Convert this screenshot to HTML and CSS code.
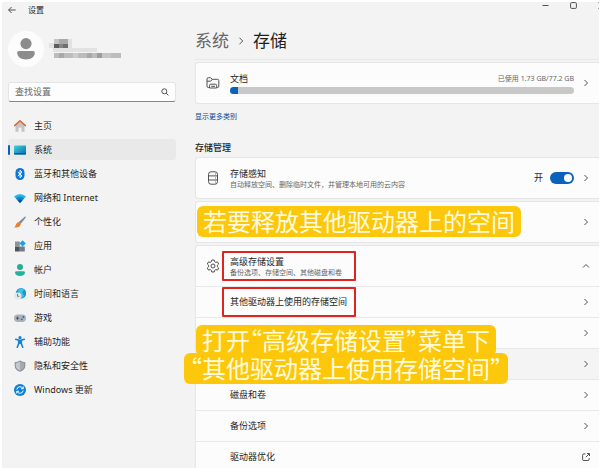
FILE: index.html
```html
<!DOCTYPE html>
<html lang="zh-CN">
<head>
<meta charset="UTF-8">
<meta name="viewport" content="width=device-width, initial-scale=1.0">
<title>设置</title>
<link rel="stylesheet" href="styles.css">
</head>
<body>

<div class="window">
  <header class="titlebar">
    <button class="icon-btn" type="button" aria-label="返回">
      <svg width="8" height="8" viewBox="0 0 8 8"><path d="M7.6 4H.6M3.6 1 .6 4l3 3" class="line"/></svg>
    </button>
    <span class="app-name">设置</span>
    <div class="window-controls">
      <button class="icon-btn" type="button" aria-label="最小化">
        <svg width="7" height="8" viewBox="0 0 7 8"><path d="M.5 3.500h6" class="line"/></svg>
      </button>
      <button class="icon-btn" type="button" aria-label="最大化">
        <svg width="7" height="8" viewBox="0 0 7 8"><rect x=".6" y=".6" width="5.8" height="5.8" rx="1" class="line"/></svg>
      </button>
      <button class="icon-btn" type="button" aria-label="关闭">
        <svg width="7" height="8" viewBox="0 0 7 8"><path d="M.5.5l6 6M6.500.5l-6 6" class="line"/></svg>
      </button>
    </div>
  </header>

  <aside class="sidebar">
    <div class="account">
      <svg class="avatar" width="36" height="36" viewBox="0 0 36 36">
        <circle cx="18" cy="18" r="18" fill="#fcfcfc"/>
        <circle cx="18" cy="12.6" r="5.6" fill="#8c8c8c"/>
        <path d="M11 20h14q1.800 0 1.800 1.800c0 4.200-4 6.700-8.800 6.700s-8.800-2.500-8.800-6.700Q9.200 20 11 20z" fill="#8c8c8c"/>
      </svg>
      <!-- 打码的用户名和邮箱 -->
      <svg width="74" height="20" viewBox="0 0 74 20">
        <path d="M0 4h5V0h18v9h25v4h-44V9H0z" fill="#e2e2e2"/>
        <rect x="5" width="5" height="5" fill="#c4c4c4"/>
        <rect x="10" width="9" height="5" fill="#a9a9a9"/>
        <rect x="5" y="5" width="5" height="4" fill="#5c5c5c"/>
        <rect x="10" y="5" width="4" height="4" fill="#858585"/>
        <rect x="14" y="5" width="5" height="4" fill="#6f6f6f"/>
        <rect x="5" y="14" width="67" height="5" fill="#bcbcbc"/>
        <rect x="10" y="14" width="5" height="5" fill="#a8a8a8"/>
        <rect x="24" y="14" width="5" height="5" fill="#cccccc"/>
        <rect x="38" y="14" width="5" height="5" fill="#a8a8a8"/>
        <rect x="48" y="14" width="5" height="5" fill="#9c9c9c"/>
        <rect x="53" y="14" width="9" height="5" fill="#c6c6c6"/>
      </svg>
    </div>

    <label class="search">
      <input type="text" placeholder="查找设置" aria-label="查找设置">
      <svg width="8" height="8" viewBox="0 0 8 8"><circle cx="3.300" cy="3.300" r="2.500" class="line"/><path d="M5.200 5.200l2.200 2.200" class="line"/></svg>
    </label>

    <nav class="nav">
      <a href="#">
        <svg width="12" height="12" viewBox="0 0 12 12"><path d="M1.500 5 6 1l4.500 4v6.200q0 .5-.5.5H7.500V7.500h-3v4.200H2q-.5 0-.5-.5z" fill="#c4c4c6"/><path d="M.6 5.600 6 .8l5.400 4.800" fill="none" stroke="#d9692f" stroke-width="1.500" stroke-linecap="round" stroke-linejoin="round"/></svg>
        主页
      </a>
      <a href="#" class="active">
        <svg width="12" height="12" viewBox="0 0 12 12"><defs><linearGradient id="sys" x2="1" y2="1"><stop stop-color="#3fd3e2"/><stop offset="1" stop-color="#0b6aa8"/></linearGradient></defs><rect y="1.500" width="12" height="9" rx=".8" fill="url(#sys)"/><path d="M0 9h12v.8q0 .7-.7.7H.7q-.7 0-.7-.7z" fill="#0a5c8f"/></svg>
        系统
      </a>
      <a href="#">
        <svg width="12" height="12" viewBox="0 0 12 12"><rect x="1.500" width="9" height="12" rx="4.500" fill="#0a74e0"/><path d="M3.800 4 8 7.800 6 9.700V2.300L8 4.200 3.800 8" fill="none" stroke="#fff"/></svg>
        蓝牙和其他设备
      </a>
      <a href="#">
        <svg width="12" height="12" viewBox="0 0 12 12"><path d="M0 4.400Q6-.6 12 4.400L6 11z" fill="#27b8ea"/><path d="M1.800 6.300Q6 2.900 10.200 6.300L6 11z" fill="#1585d4"/><path d="M3.600 8.300Q6 6.600 8.400 8.300L6 11z" fill="#0c4f9e"/></svg>
        网络和 Internet
      </a>
      <a href="#">
        <svg width="12" height="12" viewBox="0 0 12 12"><path d="M11 .4q1.200.2.600 1.400L6.600 8 4.500 6.200z" fill="#7f8b96"/><path d="M4.400 6 6.700 8.100C6.500 11 3.500 12 .2 11.500 2 10.500 1.500 7 4.400 6z" fill="#ec7f2e"/></svg>
        个性化
      </a>
      <a href="#">
        <svg width="12" height="12" viewBox="0 0 12 12"><rect x="1" y="1.500" width="4.800" height="4.800" fill="#8b949c"/><rect x="1" y="6.500" width="4.800" height="5" fill="#4c555d"/><rect x="6" y="6.500" width="4.800" height="5" fill="#737c84"/><path d="M8.600.2 11.800 3.400 8.600 6.600 5.400 3.400z" fill="#1f9fe0"/></svg>
        应用
      </a>
      <a href="#">
        <svg width="12" height="12" viewBox="0 0 12 12"><circle cx="6" cy="3" r="3" fill="#27ad96"/><path d="M2.500 7.200h7q1.500 0 1.500 1.300C11 10.600 8.800 12 6 12s-5-1.400-5-3.500q0-1.300 1.500-1.300z" fill="#23b39c"/></svg>
        帐户
      </a>
      <a href="#">
        <svg width="12" height="12" viewBox="0 0 12 12"><circle cx="7" cy="5.300" r="5.200" fill="#2196d6"/><path d="M4 2q3-2.500 6-.5L8 4.500l2 3-2 2.800Q5 8 4 2z" fill="#41c5e0"/><circle cx="3.800" cy="8" r="3.600" fill="#e4e7ea"/><path d="M3.500 6v2.300h1.800" fill="none" stroke="#59636c" stroke-width=".8"/></svg>
        时间和语言
      </a>
      <a href="#">
        <svg width="12" height="12" viewBox="0 0 12 12"><rect y="2.500" width="12" height="7.500" rx="3.700" fill="#a9b1ba"/><path d="M2 6.200h3M3.500 4.700v3" stroke="#4a535c"/><circle cx="9.400" cy="5" r=".9" fill="#1c6cc4"/><circle cx="7.800" cy="7.300" r=".9" fill="#1c6cc4"/></svg>
        游戏
      </a>
      <a href="#">
        <svg width="12" height="12" viewBox="0 0 12 12"><circle cx="6" cy="1.700" r="1.600" fill="#1583d8"/><path d="M1.700 3.200 6 4.600l4.300-1.400M6 4.500v3M4.700 4.800v2.700L3.300 11.300M7.300 4.800v2.700l1.400 3.800" fill="none" stroke="#1583d8" stroke-width="1.600" stroke-linecap="round" stroke-linejoin="round"/></svg>
        辅助功能
      </a>
      <a href="#">
        <svg width="12" height="12" viewBox="0 0 12 12"><path d="M6 .5q2.500 1.600 5.300 1.700v3.300q0 4.300-5.300 6.300Q.7 9.800.7 5.500V2.200Q3.500 2.100 6 .5z" fill="#858c94"/><path d="M6 1.600q2 1.200 4.300 1.500v2.500q0 3.500-4.300 5.100z" fill="#a5abb1"/><path d="M6 1.600Q4 2.800 1.700 3.100v2.500q0 3.500 4.300 5.100z" fill="#c4c8cc"/></svg>
        隐私和安全性
      </a>
      <a href="#">
        <svg width="12" height="12" viewBox="0 0 12 12"><circle cx="6" cy="6" r="6" fill="#0e80d4"/><path d="M2.800 5.500A3.300 3.300 0 0 1 9 4.500M9.200 6.500A3.300 3.300 0 0 1 3 7.500M9.200 2.500v2.200H7M2.800 9.500V7.300H5" fill="none" stroke="#fff"/></svg>
        Windows 更新
      </a>
    </nav>
  </aside>

  <main class="content">
    <h1 class="breadcrumb">
      <a href="#">系统</a>
      <svg width="6" height="8" viewBox="0 0 6 8"><path d="M1.500.8 4.700 4 1.500 7.200" class="line"/></svg>
      <span>存储</span>
    </h1>

    <div class="panel">
      <section class="card">
        <a href="#" class="row tall">
          <svg class="row-icon" width="14" height="14" viewBox="0 0 14 14"><path d="M3 11.500H2.300Q1 11.500 1 10.200V3Q1 1.700 2.300 1.700h2.400L6.300 3.300h5.200q1.300 0 1.300 1.300v5.600q0 1.300-1.300 1.300H11M1 5.200h3.700l1.600-1.900M3.500 12V9.500q0-1.300 1.300-1.300h4.600q1.300 0 1.300 1.300V12zM5.200 10.300h3.800" class="line"/></svg>
          <span class="usage">
            <span class="usage-head">
              <span>文档</span>
              <span class="hint">已使用 1.73 GB/77.2 GB</span>
            </span>
            <span class="bar"><span class="bar-fill" style="width: 2.24%"></span></span>
          </span>
          <svg class="chevron" width="8" height="8" viewBox="0 0 8 8"><path d="M2.500 1 5.500 4l-3 3" class="line"/></svg>
        </a>
      </section>

      <a href="#" class="more">显示更多类别</a>

      <h2>存储管理</h2>

      <section class="card">
        <div class="row tall">
          <svg class="row-icon" width="14" height="14" viewBox="0 0 14 14"><rect x="2.500" y=".8" width="9" height="12.400" rx="2.500" class="line"/><path d="M2.500 4.900h9M2.500 9h9M9 3h.8M9 7h.8M9 11h.8" class="line"/></svg>
          <span class="text">
            <span>存储感知</span>
            <span class="hint">自动释放空间、删除临时文件，并管理本地可用的云内容</span>
          </span>
          <label class="switch">
            开
            <input type="checkbox" checked>
          </label>
          <svg class="chevron" width="8" height="8" viewBox="0 0 8 8"><path d="M2.500 1 5.500 4l-3 3" class="line"/></svg>
        </div>
      </section>

      <section class="card cleanup">
        <a href="#" class="row tall" aria-label="清理建议">
          <svg class="chevron" width="8" height="8" viewBox="0 0 8 8"><path d="M2.500 1 5.500 4l-3 3" class="line"/></svg>
        </a>
        <p class="caption caption-top"><span>若要释放其他驱动器上的空间</span></p>
      </section>

      <section class="card advanced">
        <button type="button" class="row tall">
          <svg class="row-icon" width="14" height="14" viewBox="0 0 14 14"><path d="M5.800 1h2.400l.4 1.700 1.200.7 1.700-.5 1.200 2.100L11.400 6.200v1.600l1.300 1.200-1.200 2.100-1.700-.5-1.200.7-.4 1.700H5.800l-.4-1.700-1.200-.7-1.700.5L1.300 9l1.300-1.200V6.200L1.300 5l1.200-2.100 1.700.5 1.200-.7z" class="line" stroke-linejoin="round"/><circle cx="7" cy="7" r="2" class="line"/></svg>
          <span class="text marked">
            <span>高级存储设置</span>
            <span class="hint">备份选项、存储空间、其他磁盘和卷</span>
          </span>
          <svg class="chevron" width="8" height="8" viewBox="0 0 8 8"><path d="M1 5.500l3-3 3 3" class="line"/></svg>
        </button>
        <a href="#" class="row sub">
          <span class="text marked">其他驱动器上使用的存储空间</span>
          <svg class="chevron" width="8" height="8" viewBox="0 0 8 8"><path d="M2.500 1 5.500 4l-3 3" class="line"/></svg>
        </a>
        <a href="#" class="row sub" aria-label="存储空间">
          <svg class="chevron" width="8" height="8" viewBox="0 0 8 8"><path d="M2.500 1 5.500 4l-3 3" class="line"/></svg>
        </a>
        <a href="#" class="row sub hovered" aria-label="存储池">
          <svg class="chevron" width="8" height="8" viewBox="0 0 8 8"><path d="M2.500 1 5.500 4l-3 3" class="line"/></svg>
        </a>
        <a href="#" class="row sub">
          <span class="text">磁盘和卷</span>
          <svg class="chevron" width="8" height="8" viewBox="0 0 8 8"><path d="M2.500 1 5.500 4l-3 3" class="line"/></svg>
        </a>
        <a href="#" class="row sub">
          <span class="text">备份选项</span>
          <svg class="chevron" width="8" height="8" viewBox="0 0 8 8"><path d="M2.500 1 5.500 4l-3 3" class="line"/></svg>
        </a>
        <a href="#" class="row sub">
          <span class="text">驱动器优化</span>
          <svg class="chevron" width="8" height="8" viewBox="0 0 8 8"><path d="M3.500.9H1.900Q.6.900.6 2.200v4Q.6 7.500 1.900 7.500h4q1.300 0 1.300-1.300V5M5 .5h2.500V3M7.400.6 3.800 4.200" class="line"/></svg>
        </a>
        <p class="caption caption-bottom">
          <span>打开“高级存储设置”菜单下</span>
          <span>“其他驱动器上使用存储空间”</span>
        </p>
      </section>
    </div>
  </main>
</div>

</body>
</html>
```
FILE: styles.css
```css
* {
  box-sizing: border-box;
}
body {
  margin: 0;
  background: #fff;
  color: #1f1f1f;
  font-family: "Noto Sans", "Noto Sans CJK SC", sans-serif;
  font-size: 9px;
  line-height: 12px;
}
a {
  color: inherit;
  text-decoration: none;
}
button {
  border: 0;
  padding: 0;
  background: none;
  color: inherit;
  font: inherit;
  text-align: left;
}
svg {
  flex: none;
  display: block;
}
.line {
  fill: none;
  stroke: #505050;
  stroke-width: 1;
}
.window {
  height: 100vh;
  overflow: hidden;
  border: solid #fff;
  border-width: 2px 1px 0 2px;
  background: #f3f3f3;
  display: grid;
  grid-template-columns: 193px 1fr;
  grid-template-rows: 16px 1fr;
}

/* 标题栏 */
.titlebar {
  grid-column: 1 / -1;
  display: flex;
  align-items: center;
  padding-left: 6px;
  margin-right: -6px;
}
.app-name {
  margin-left: 12px;
  font-size: 8px;
}
.window-controls {
  display: flex;
  gap: 21px;
  margin-left: auto;
  align-self: flex-start;
}

/* 左侧导航 */
.sidebar {
  padding: 13px 19px 0 6px;
}
.account {
  display: flex;
  align-items: center;
  gap: 5px;
}
.search {
  display: flex;
  align-items: center;
  height: 20px;
  margin: 15px 0 13px;
  padding: 0 6px;
  border: 1px solid #e4e4e4;
  border-bottom-color: #868686;
  border-radius: 3px;
  background: #fdfdfd;
}
.search input {
  flex: 1;
  min-width: 0;
  border: 0;
  padding: 0;
  outline: 0;
  background: none;
  font: inherit;
}
.search input::placeholder {
  color: #666;
}
.nav {
  display: flex;
  flex-direction: column;
  gap: 3px;
}
.nav a {
  position: relative;
  display: flex;
  align-items: center;
  gap: 8px;
  height: 21px;
  padding-left: 6px;
  border-radius: 3px;
}
.nav a.active {
  background: #e9e9e9;
}
.nav a.active::before {
  content: "";
  position: absolute;
  left: 0;
  top: 6px;
  width: 2px;
  height: 10px;
  border-radius: 1px;
  background: #0a5fb8;
}

/* 右侧内容 */
.content {
  min-width: 0;
}
.breadcrumb {
  display: flex;
  align-items: center;
  gap: 9px;
  height: 41px;
  margin: 0;
  padding-top: 4px;
  font-size: 17px;
  font-weight: 400;
  line-height: 24px;
}
.breadcrumb a {
  color: #666;
}
.panel {
  border-top: 1px solid #e8e8e8;
  padding-top: 2px;
}
.card {
  position: relative;
  border: 1px solid #e6e6e6;
  border-right: 0;
  border-radius: 3px 0 0 3px;
  background: #fcfcfc;
  margin-bottom: 2px;
}
.row {
  display: flex;
  align-items: center;
  width: 100%;
  padding: 0 9px 0 10px;
}
.row.tall {
  height: 40px;
}
.row.sub {
  height: 31px;
  padding-left: 34px;
  border-top: 1px solid #e8e8e8;
}
.row.hovered {
  background: #f4f4f4;
}
.row-icon {
  margin-right: 10px;
}
.chevron {
  margin-left: auto;
}
.text,
.usage {
  display: flex;
  flex-direction: column;
}
.hint {
  color: #666;
  font-size: 7px;
  line-height: 9px;
}
.usage {
  flex: 1;
  gap: 2px;
  margin-right: 8px;
}
.usage-head {
  display: flex;
  align-items: center;
  justify-content: space-between;
}
.bar {
  height: 7px;
  border-radius: 4px;
  background: #c8c8c8;
  overflow: hidden;
}
.bar-fill {
  display: block;
  height: 100%;
  background: #0a62bd;
}
.more {
  display: block;
  margin-top: 7px;
  color: #0a4a94;
  font-size: 7px;
}
h2 {
  margin: 19px 0 3px;
  font-size: 9px;
  font-weight: 500;
}
.switch {
  display: flex;
  align-items: center;
  gap: 7px;
  margin-left: auto;
}
.switch + .chevron {
  margin-left: 8px;
}
.switch input {
  appearance: none;
  width: 24px;
  height: 12px;
  margin: 0;
  padding: 2px;
  border-radius: 6px;
  background: #0a62bd;
}
.switch input::before {
  content: "";
  display: block;
  width: 8px;
  height: 8px;
  border-radius: 50%;
  background: #fff;
}
.switch input:checked::before {
  margin-left: auto;
}

/* 教程标注 */
.marked {
  position: relative;
}
.marked::after {
  content: "";
  box-sizing: border-box;
  position: absolute;
  top: 50%;
  left: -8px;
  width: 134px;
  height: 30px;
  transform: translateY(-50%);
  border: 2px solid #e0251f;
  border-radius: 1px;
}
.caption {
  position: absolute;
  z-index: 1;
  display: flex;
  flex-direction: column;
  align-items: center;
  margin: 0;
  color: #fffbdc;
  font-family: "Noto Sans CJK SC", sans-serif;
  font-feature-settings: "halt";
  font-size: 24px;
  line-height: 28px;
  white-space: nowrap;
}
.caption span {
  padding: 1px 6px 2px;
  border-radius: 6px;
  background: #fdc70c;
}
.caption-top {
  top: 4px;
  left: 1px;
}
.caption-bottom {
  top: 79px;
  left: -12px;
}
.caption-bottom span + span {
  margin-top: -3px;
}
```
